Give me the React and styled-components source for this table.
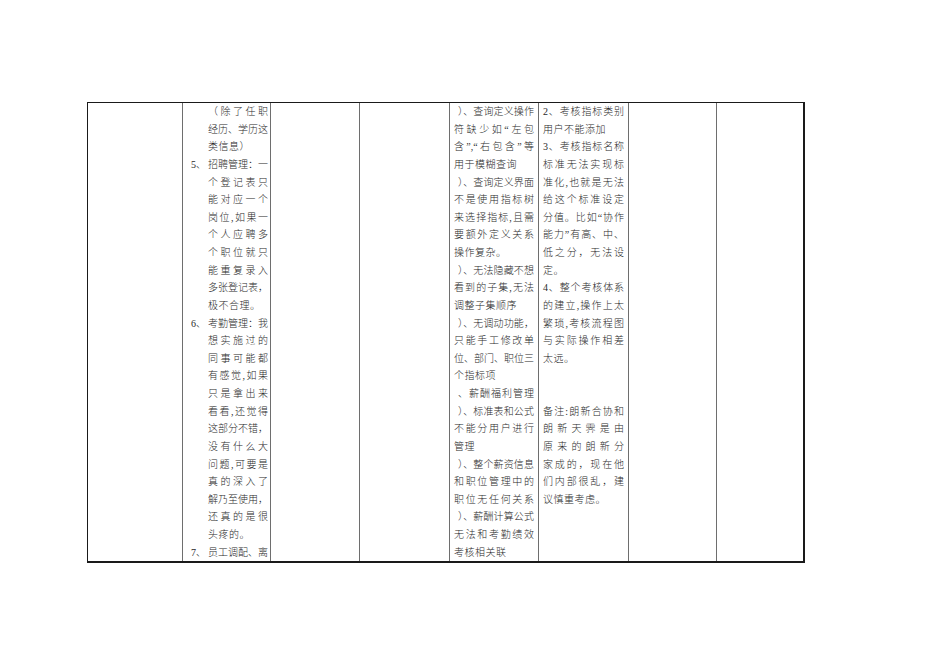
import React from "react";
import styled, { createGlobalStyle } from "styled-components";

const Global = createGlobalStyle`
  html, body { margin: 0; padding: 0; background: #ffffff; }
  body { font-family: "Liberation Serif", "Noto Sans CJK SC", serif; }
`;

const Page = styled.div`
  width: 950px;
  height: 672px;
  box-sizing: border-box;
  padding: 102px 0 0 87px;
  background: #ffffff;
`;

const Table = styled.div`
  display: grid;
  grid-template-columns: 94px 88px 89px 90px 89px 90px 88px 90px;
  width: 718px;
  box-sizing: border-box;
  border-top: 1px solid #1a1a1a;
  border-left: 1px solid #1a1a1a;
  border-right: 2px solid #1a1a1a;
  border-bottom: 2px solid #1a1a1a;
`;

const Cell = styled.div`
  box-sizing: border-box;
  border-left: ${(p) => (p.$first ? "none" : "1px solid #6e6e6e")};
  padding: 0 ${(p) => p.$pr || 0}px 0 ${(p) => p.$pl || 0}px;
  min-width: 0;
`;

const Line = styled.div`
  display: flex;
  height: 17.64px;
  line-height: 17.64px;
  font-size: 10px;
  font-weight: 300;
  color: #2a2a2a;
  white-space: nowrap;
`;

const Marker = styled.span`
  flex: 0 0 ${(p) => p.$w}px;
`;

const Text = styled.span`
  flex: 1 1 auto;
  min-width: 0;
  text-align: justify;
  text-align-last: ${(p) => (p.$last ? "left" : "justify")};
  letter-spacing: ${(p) => (p.$last ? "0.5px" : "0")};
  padding-left: ${(p) => p.$indent || 0}px;
`;

const col2 = [
  { t: "（除了任职" },
  { t: "经历、学历这" },
  { t: "类信息）", last: true },
  { n: "5、", t: "招聘管理：一" },
  { t: "个登记表只" },
  { t: "能对应一个" },
  { t: "岗位,如果一" },
  { t: "个人应聘多" },
  { t: "个职位就只" },
  { t: "能重复录入" },
  { t: "多张登记表，" },
  { t: "极不合理。", last: true },
  { n: "6、", t: "考勤管理：我" },
  { t: "想实施过的" },
  { t: "同事可能都" },
  { t: "有感觉,如果" },
  { t: "只是拿出来" },
  { t: "看看,还觉得" },
  { t: "这部分不错，" },
  { t: "没有什么大" },
  { t: "问题,可要是" },
  { t: "真的深入了" },
  { t: "解乃至使用，" },
  { t: "还真的是很" },
  { t: "头疼的。", last: true },
  { n: "7、", t: "员工调配、离" },
];

const col5 = [
  { t: "）、查询定义操作", i: 4 },
  { t: "符缺少如“左包" },
  { t: "含”,“右包含”等" },
  { t: "用于模糊查询", last: true },
  { t: "）、查询定义界面", i: 4 },
  { t: "不是使用指标树" },
  { t: "来选择指标,且需" },
  { t: "要额外定义关系" },
  { t: "操作复杂。", last: true },
  { t: "）、无法隐藏不想", i: 4 },
  { t: "看到的子集,无法" },
  { t: "调整子集顺序", last: true },
  { t: "）、无调动功能，", i: 4 },
  { t: "只能手工修改单" },
  { t: "位、部门、职位三" },
  { t: "个指标项", last: true },
  { t: "、薪酬福利管理", i: 4 },
  { t: "）、标准表和公式", i: 4 },
  { t: "不能分用户进行" },
  { t: "管理", last: true },
  { t: "）、整个薪资信息", i: 4 },
  { t: "和职位管理中的" },
  { t: "职位无任何关系" },
  { t: "）、薪酬计算公式", i: 4 },
  { t: "无法和考勤绩效" },
  { t: "考核相关联", last: true },
];

const col6 = [
  { t: "2、考核指标类别" },
  { t: "用户不能添加", last: true },
  { t: "3、考核指标名称" },
  { t: "标准无法实现标" },
  { t: "准化,也就是无法" },
  { t: "给这个标准设定" },
  { t: "分值。比如“协作" },
  { t: "能力”有高、中、" },
  { t: "低之分，无法设" },
  { t: "定。", last: true },
  { t: "4、整个考核体系" },
  { t: "的建立,操作上太" },
  { t: "繁琐,考核流程图" },
  { t: "与实际操作相差" },
  { t: "太远。", last: true },
  { t: "", last: true },
  { t: "", last: true },
  { t: "备注:朗新合协和" },
  { t: "朗新天霁是由" },
  { t: "原来的朗新分" },
  { t: "家成的，现在他" },
  { t: "们内部很乱，建" },
  { t: "议慎重考虑。", last: true },
];

function Lines({ items, marker }) {
  return items.map((it, k) => (
    <Line key={k}>
      {marker ? <Marker $w={marker}>{it.n || ""}</Marker> : null}
      <Text $last={it.last} $indent={it.i}>
        {it.t || "\u00a0"}
      </Text>
    </Line>
  ));
}

export default function App() {
  return (
    <Page>
      <Global />
      <Table>
        <Cell $first />
        <Cell $pl={8} $pr={2}>
          <Lines items={col2} marker={17} />
        </Cell>
        <Cell />
        <Cell />
        <Cell $pl={4} $pr={4}>
          <Lines items={col5} />
        </Cell>
        <Cell $pl={4} $pr={4}>
          <Lines items={col6} />
        </Cell>
        <Cell />
        <Cell />
      </Table>
    </Page>
  );
}
